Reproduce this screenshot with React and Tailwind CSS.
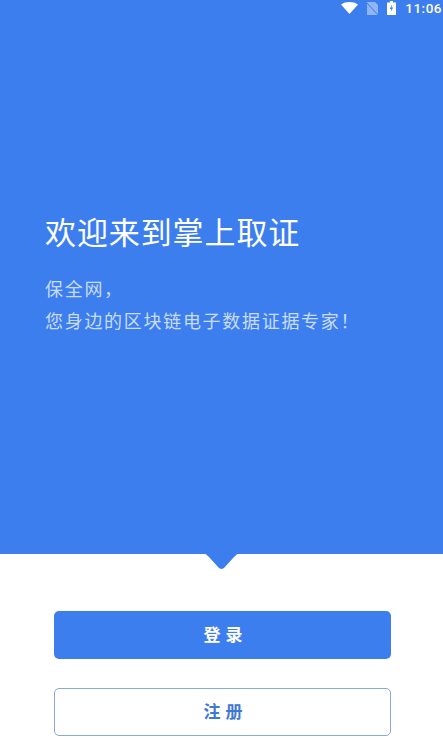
export default function App() {
  return (
    <div className="w-[443px] h-[746px] flex flex-col bg-white overflow-hidden font-['Noto_Sans_CJK_SC','Noto_Sans',sans-serif]">
      <div className="relative h-[554px] shrink-0 bg-[#3d7eee] flex flex-col">
        <div className="h-[16px] flex items-center justify-end pr-[1px] gap-[9px] text-white">
          <svg width="17" height="12" viewBox="0 0 17 12"><path d="M0 2.500C2.300.8 5.200 0 8.500 0s6.200.8 8.500 2.500L8.500 12z" fill="#fff" /></svg>
          <svg width="11" height="13" viewBox="0 0 11 13"><path d="M2 0h6l3 3v10H0V0z" fill="#8fb5f4" /><path d="M0 1l11 12" stroke="#3d7eee" strokeWidth="1" /></svg>
          <svg width="9" height="14" viewBox="0 0 9 14"><path d="M3 0h3v1.500h3V14H0V1.500h3z" fill="#fff" /><path d="M5 3.500L2.800 8h1.500l-.6 3 2.500-4.500H4.600z" fill="#3d7eee" /></svg>
          <span className="text-[13.500px] leading-[16px] font-medium font-['Roboto',sans-serif] tracking-[0.5px]">11:06</span>
        </div>
        <div className="pl-[45px] pt-[195px] flex flex-col text-white">
          <h1 className="text-[31px] leading-[40px] font-normal tracking-[0.9px] whitespace-nowrap">欢迎来到掌上取证</h1>
          <p className="mt-[21px] text-[18px] leading-[32px] text-[#c9dcfb] tracking-[1.700px] whitespace-nowrap">保全网，</p>
          <p className="text-[18px] leading-[32px] text-[#c9dcfb] tracking-[1.700px] whitespace-nowrap">您身边的区块链电子数据证据专家！</p>
        </div>
        <svg className="absolute left-[203px] top-[553px]" width="37" height="17" viewBox="0 0 37 17">
          <path d="M0 0h37c-3 1-4.500 2.500-6 4L21.500 14.600a4 4 0 0 1-6 0L6 4C4.500 2.500 3 1 0 0z" fill="#3d7eee" />
        </svg>
      </div>
      <div className="flex flex-col items-start pl-[54px] pt-[57px] gap-[29px]">
        <button className="w-[337px] h-[48px] pl-[6px] pb-[2px] rounded-[5px] bg-[#3d7eee] text-white text-[17px] font-bold tracking-[5px]">登录</button>
        <button className="w-[337px] h-[48px] pl-[6px] pb-[2px] rounded-[5px] bg-white border border-[#8aa9d8] text-[#3f78d2] text-[17px] font-bold tracking-[5px]">注册</button>
      </div>
    </div>
  );
}
